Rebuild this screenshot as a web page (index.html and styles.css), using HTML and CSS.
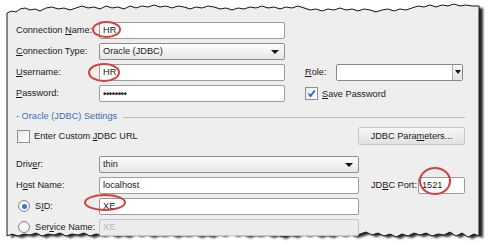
FILE: index.html
```html
<!DOCTYPE html>
<html lang="en">
<head>
<meta charset="UTF-8"/>
<title>New Database Connection</title>
<link rel="stylesheet" href="styles.css">
</head>
<body>
<div class="page">
  <!-- torn paper background -->
  <svg class="paper" width="488" height="245" viewBox="0 0 488 245">
    <defs>
      <filter id="soft" x="-5%" y="-5%" width="110%" height="110%"><feGaussianBlur stdDeviation="1.2"/></filter>
      <path id="edge" d="M7,13 L12,11 L16,12 L20,9 L25,8 L30,10 L35,9 L40,11 L46,8 L52,7 L58,9 L64,8 L70,10 L76,8 L82,6 L88,8 L94,7 L100,9 L106,6 L112,8 L118,7 L124,9 L130,6 L136,8 L142,6 L148,7 L154,5 L160,7 L166,6 L172,8 L178,6 L184,7 L190,9 L196,7 L202,8 L208,6 L214,7 L220,9 L226,8 L232,10 L238,8 L244,9 L250,7 L256,8 L262,6 L268,8 L274,7 L280,9 L286,7 L292,8 L298,6 L304,8 L310,10 L316,9 L322,11 L328,9 L334,10 L340,8 L346,10 L352,9 L358,11 L364,9 L370,10 L376,12 L382,10 L388,9 L394,11 L400,9 L406,10 L412,8 L418,6 L424,7 L430,5 L436,7 L442,5 L448,6 L454,4 L460,6 L466,5 L472,6 L479,6 L479,236 L474,234 L468,237 L462,233 L456,236 L450,232 L444,235 L438,234 L432,236 L426,233 L420,235 L414,233 L408,236 L402,234 L396,237 L390,234 L384,236 L378,233 L372,235 L366,232 L360,234 L354,236 L348,233 L342,235 L336,233 L330,236 L324,234 L318,236 L312,233 L306,235 L300,233 L294,236 L288,234 L282,237 L276,234 L270,236 L264,233 L258,235 L252,234 L246,236 L240,233 L234,235 L228,232 L222,235 L216,233 L210,236 L204,234 L198,236 L192,233 L186,235 L180,234 L174,236 L168,233 L162,235 L156,234 L150,236 L144,233 L138,235 L132,233 L126,236 L120,234 L114,236 L108,233 L102,235 L96,234 L90,236 L84,233 L78,235 L72,234 L66,236 L60,233 L54,235 L48,234 L42,236 L36,233 L30,235 L24,234 L18,236 L12,234 L7,236 Z"/>
    </defs>
    <use href="#edge" transform="translate(4,2)" fill="#2a2a2a" filter="url(#soft)"/>
    <use href="#edge" fill="#eeeeee" stroke="#1a1a1a" stroke-width="1"/>
  </svg>

  <form class="panel">
    <!-- ─── CONNECTION ─────────────────────────── -->
    <div class="grid top">
      <span class="lbl">Connection <u>N</u>ame:</span>
      <span class="field">HR</span>

      <span class="lbl"><u>C</u>onnection Type:</span>
      <span class="combo">Oracle (JDBC)<i class="arrow"></i></span>

      <span class="lbl"><u>U</u>sername:</span>
      <span class="field">HR</span>
      <span class="lbl right"><u>R</u>ole:</span>
      <span class="field role"><b class="btn"><i class="arrow"></i></b></span>

      <span class="lbl"><u>P</u>assword:</span>
      <span class="field dots">••••••••</span>
      <span class="check right wide"><span class="box on"><svg width="9" height="9" viewBox="0 0 9 9"><path d="M1.5,4.5 L3.5,7 L7.8,1.5" fill="none" stroke="#2b63c9" stroke-width="1.8"/></svg></span><span class="txt"><u>S</u>ave Password</span></span>
    </div>

    <!-- ─── ORACLE SETTINGS ────────────────────── -->
    <div class="legend"><span>- Oracle (JDBC) Settings</span></div>

    <div class="optrow">
      <span class="check"><span class="box"></span><span class="txt">Enter Custom <u>J</u>DBC URL</span></span>
      <span class="button">JDBC Para<u>m</u>eters...</span>
    </div>

    <div class="grid bottom">
      <span class="lbl">Driv<u>e</u>r:</span>
      <span class="combo">thin<i class="arrow"></i></span>

      <span class="lbl">H<u>o</u>st Name:</span>
      <span class="field">localhost</span>
      <span class="lbl right">JD<u>B</u>C Port:</span>
      <span class="field">1521</span>

      <span class="lbl"><span class="radio on"></span>S<u>I</u>D:</span>
      <span class="field">XE</span>

      <span class="lbl"><span class="radio"></span>Ser<u>v</u>ice Name:</span>
      <span class="field off">XE</span>
    </div>
  </form>

  <!-- red callouts -->
  <span class="ring r1"></span>
  <span class="ring r2"></span>
  <span class="ring r3"></span>
  <span class="ring r4"></span>
</div>
</body>
</html>
```

FILE: styles.css
```css
*,*::before,*::after{box-sizing:border-box;margin:0;padding:0}
body{background:#fff;font-family:"Liberation Sans",Arial,sans-serif;font-size:9.2px;color:#1a1a1a}
.page{position:relative;width:488px;height:245px;overflow:hidden}
.paper{position:absolute;left:0;top:0}
u{text-decoration:underline;text-underline-offset:1px}

/* ─── PANEL ─────────────────────────────────── */
.panel{position:relative;padding:22px 0 0 16px;width:465px}
.grid{display:grid;row-gap:4px;grid-auto-rows:17px;align-items:center}
.top{grid-template-columns:83px 186px 20px 31px 127px}
.bottom{grid-template-columns:83px 260px 12px 47px 47px;margin-top:11px}
.lbl{grid-column:1;display:block;line-height:17px;white-space:nowrap}
.lbl.right{grid-column:4}
.field,.combo{grid-column:2;display:block;height:17px;line-height:15px;padding-left:3px;background:#fff;border:1px solid #9c9c9c;border-radius:2px;white-space:nowrap}
.lbl.right+.field{grid-column:5}
.combo{position:relative;background:linear-gradient(#fdfdfd,#e6e6e6);border-color:#8e8e8e}
.arrow{position:absolute;right:5px;top:6px;border-left:4px solid transparent;border-right:4px solid transparent;border-top:4px solid #111}
.field.role{position:relative;border-color:#888}
.role .btn{position:absolute;right:0;top:0;bottom:0;width:10px;border-left:1px solid #aaa;background:linear-gradient(#fafafa,#e2e2e2)}
.role .arrow{right:1px;top:5px;border-left-width:3px;border-right-width:3px}
.dots{font-size:9.5px;letter-spacing:-.4px;font-weight:bold}
.field.off{background:#ececec;border-color:#c6c6c6;color:#b8b8b8}

/* checkboxes & radios */
.check{display:flex;align-items:center;gap:4px;white-space:nowrap}
.check.wide{grid-column:4 / 6}
.box{flex:none;width:13px;height:13px;border:1px solid #8f8f8f;background:linear-gradient(135deg,#e9e9e9,#fff);display:grid;place-items:center}
.radio{display:inline-block;vertical-align:-3px;width:12px;height:12px;border-radius:50%;border:1px solid #8a8a8a;background:radial-gradient(circle,#fff 30%,#e2e2e2);margin:0 5px 0 2px;position:relative}
.radio.on::after{content:"";position:absolute;left:2.5px;top:2.5px;width:5px;height:5px;border-radius:50%;background:#3a74d0}

/* section header */
.legend{display:flex;align-items:center;gap:6px;margin-top:9px;height:10px;color:#3b6db3}
.legend::after{content:"";flex:1;height:1px;background:#b8b8b8;margin-top:2px}
.optrow{display:flex;justify-content:space-between;align-items:center;margin-top:6px;padding-left:1px}
.button{display:block;height:18px;width:107px;line-height:16px;text-align:center;border:1px solid #c4c4c4;border-radius:2px;background:linear-gradient(#f7f7f7,#e1e1e1);white-space:nowrap}

/* ─── RED CALLOUTS ──────────────────────────── */
.ring{position:absolute;border:2px solid #d4403e;border-radius:50%}
.r1{left:92px;top:21px;width:29px;height:17px}
.r2{left:88px;top:63px;width:32px;height:19px}
.r3{left:84px;top:194px;width:42px;height:17px}
.r4{left:419px;top:167px;width:32px;height:28px}
```
